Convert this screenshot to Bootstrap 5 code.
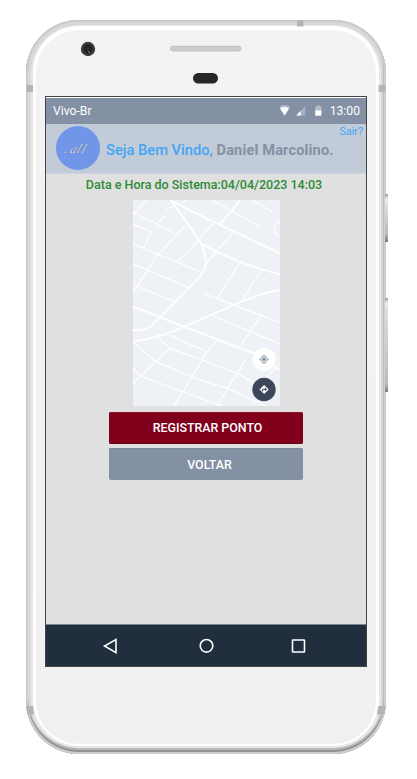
<!DOCTYPE html>
<html lang="pt-BR">
<head>
<meta charset="utf-8">
<meta name="viewport" content="width=device-width, initial-scale=1">
<title>Registro de Ponto</title>
<link rel="stylesheet" href="https://cdn.jsdelivr.net/npm/bootstrap@5.3.0/dist/css/bootstrap.min.css">
<style>
body { background: #fff; font-family: Roboto, sans-serif; width: 417px; height: 779px; overflow: hidden; }
.device { width: 360px; height: 734px; margin: 20px 0 0 26px; padding: 76px 18px 0 19px; border-radius: 53px;
  background: linear-gradient(#f3f3f3, #f0f0f0);
  box-shadow: inset 0 0 0 1px #c9c9c9, inset 0 0 0 2px #d0d0d0, inset 0 -2px 0 2px #929292, inset -2px -3px 0 1px #bcbcbc,
    inset 0 -4px 0 2px #b9b9b9, inset 0 0 0 5px #d8d8d8, inset 0 -1px 0 7px #e7e7e7, inset 0 0 1px 10px #fff; }
.bezel { left: 0; top: 0; }
.side-key { left: 359px; width: 3px; background: linear-gradient(#999 0, #eee 5px, #ddd 12px, #bbb calc(100% - 8px), #777 100%); }
.key-power { top: 174px; height: 48px; }
.key-volume { top: 278px; height: 94px; }
.screen { width: 322px; height: 571px; border: 1px solid #444; background: #e0e0e0; }
.status { height: 27px; background: #8490a4; border-top: 1px solid #fff; padding: 1px 6px 1px 7px; font-size: 12.2px; }
.welcome { height: 50px; background: #c2cbd8; border-bottom: 1px solid #ccd3dc; padding-left: 10px; }
.logo { width: 44px; height: 44px; background: #7195e9; margin-top: -2px; }
.hello { margin: 4px 0 0 6px; font-size: 14.7px; font-weight: 500; color: #42a5f5; white-space: nowrap; }
.person { color: #8490a4; font-weight: 700; font-size: 14.6px; letter-spacing: .14px; }
.leave { right: 3px; top: 1px; font-size: 10.7px; line-height: 14px; color: #42a5f5; }
.stamp { font-size: 12.5px; line-height: 16px; font-weight: 500; color: #2e8b37; margin: 3px 0 7px; padding-right: 4px; }
.area-map { width: 147px; height: 206px; margin-left: 86.5px; }
.action { width: 194px; height: 32px; margin-left: 63px; border: 0; border-radius: 2px; font-size: 12.4px; font-weight: 500; line-height: 29px; padding: 0 0 2px 3px; color: #fff !important; }
.register { background: #80001c !important; margin-top: 6px; box-shadow: inset 0 1px #8a1028, inset 0 -1px #6b0017; }
.back { background: #8490a4 !important; margin-top: 4px; padding: 0 0 0 7px; box-shadow: inset 0 1px #7b889b; }
.softkeys { height: 42px; background: #202e3d; border-top: 1px solid #78858e; }
</style>
<script src="https://cdn.jsdelivr.net/npm/bootstrap@5.3.0/dist/js/bootstrap.bundle.min.js"></script>
</head>
<body>
<div class="overflow-hidden">
<div class="device position-relative">
  <svg class="bezel position-absolute" width="360" height="734" viewBox="26 20 360 734" aria-hidden="true">
    <circle cx="88" cy="49" r="7.2" fill="#3a3b3d"/><circle cx="88" cy="49" r="4.4" fill="#17181a"/><circle cx="88" cy="49" r="3" fill="#28292c"/><circle cx="89" cy="52" r="1.1" fill="#6c6828"/>
    <rect x="170.5" y="46.3" width="70.5" height="4.600" rx="2.3" fill="#cdcdcd" stroke="#bdbdbd"/>
    <rect x="193" y="73" width="25" height="10.4" rx="5.2" fill="#262626"/>
    <g fill="#b5b5b5"><path d="M297 20h6.500v6.500h-6.500zM26.500 85h6.500v7h-6.500zM378.500 85h7v7h-7z"/><path d="M26.300 706h6.700l1 8.500h-6.500zM378.300 706h7.200l-1.300 8.500h-7.400z"/></g>
  </svg>
  <div class="side-key key-power position-absolute"></div>
  <div class="side-key key-volume position-absolute"></div>
  <main class="screen d-flex flex-column">
    <div class="status d-flex align-items-center text-white flex-shrink-0">
      <span class="me-auto">Vivo-Br</span>
      <svg width="46" height="14" viewBox="278 104 46 14" class="me-1" aria-hidden="true">
        <g transform="translate(-1.800 0)">
        <path d="M278.700 106.700q5.700-3.400 11.400 0l-5.700 8.800z" fill="#b3bbc8"/><path d="M280 108.400q4.400-2.700 8.800 0l-4.400 7z" fill="#fff"/>
        <path d="M305 106v9.500h-9z" fill="#a9b2c0"/><path d="M300.500 110.700v4.800h-4.500z" fill="#fff"/>
        <path d="M315 106.500h1.500v-1.300h3v1.300h1.700v4.500h-6.200z" fill="#b3bbc8"/><path d="M315 110.500h6.200v5.200h-6.200z" fill="#fff"/>
        </g>
      </svg>
      <span>13:00</span>
    </div>
    <header class="welcome d-flex align-items-center position-relative flex-shrink-0">
      <svg class="logo rounded-circle flex-shrink-0" viewBox="0 0 44 44">
        <g font-family="Liberation Serif, serif" font-style="italic" font-size="13" transform="translate(8 26.500) skewX(-22)"><text x=".8" y=".6" fill="#4a5d92"><tspan>.</tspan><tspan dx="2">a</tspan><tspan dx=".3">l</tspan><tspan dx="1">l</tspan></text><text fill="#d5d6d6"><tspan>.</tspan><tspan dx="2">a</tspan><tspan dx=".3">l</tspan><tspan dx="1">l</tspan></text></g>
      </svg>
      <div class="hello">Seja Bem Vindo, <span class="person">Daniel Marcolino.</span></div>
      <a class="leave position-absolute text-decoration-none" href="#">Sair?</a>
    </header>
    <p class="stamp text-center">Data e Hora do Sistema:04/04/2023 14:03</p>
    <svg class="area-map flex-shrink-0" viewBox="22 15 441 618" aria-label="Mapa">
      <path fill="#eef1f6" d="M22 15h441v618H22z"/>
      <g fill="none" stroke="#fff" stroke-width="3.500">
        <path d="M60 15 22 60M22 50l128 68M118 63 93 85M182 15l-12 10M120 45l25-12M263 83l-43 50M180 92 95 180 22 292M22 87l55 25-25 48M22 148l203 82M22 207l168 71M22 268l126 52M155 202l65-67M322 113l-47 54M258 15l145 80M378 15l65 37M343 203l-68 105M408 225l-61 93M238 297l92 33M285 315l178 67M255 360l208 87M405 362l-60 91M132 315l15 5M463 80q-24 15-15 35l15 13"/>
        <path d="M22 440l68 60 120 50 95 30 115 53M45 543l125 47 120 43M22 522l23 21-23 22M45 543l87-83-37-33M132 460l98 35 115 45 40 25M130 420l113 50M275 437l-32 33-13 25-85 138M360 495l-55 85-30 53M463 505l-38 40"/>
      </g>
      <g fill="none" stroke="#fff" stroke-width="5.500">
        <path d="M135 15l85 120q20 30 20 70 0 30-50 73l-45 47-70 70q-18 13-53 10M135 15l55 30 90 43 183 87M345 15l-62 72M225 145q105 60 238 93M275 167l-35 38M463 285q-45 7-103 30l-185 80q-60 30-153 45M22 335l153 60 210 80 78 50"/>
      </g>
      <circle cx="415" cy="493" r="35" fill="#fff"/><g fill="none" stroke="#7e8d9b" stroke-width="2.500"><circle cx="415" cy="493" r="10"/><path d="M415 479v4M415 503v4M401 493h4M425 493h4"/></g><circle cx="415" cy="493" r="5.500" fill="#7e8d9b"/>
      <circle cx="415" cy="583.500" r="35" fill="#3c485a"/><path d="M415.500 571l12.500 12.500-12.500 12.500-12.500-12.500z" fill="#fff" stroke="#fff" stroke-width="2" stroke-linejoin="round"/><path d="M410.500 589v-6h9" fill="none" stroke="#3c485a" stroke-width="3"/><path d="M418 577.500l6 5.500-6 5.500z" fill="#3c485a"/>
    </svg>
    <button class="btn action register flex-shrink-0">REGISTRAR PONTO</button>
    <button class="btn action back flex-shrink-0">VOLTAR</button>
    <svg class="softkeys mt-auto w-100 flex-shrink-0" viewBox="46 625 320 41" fill="none" stroke="#fff" stroke-width="1.600" aria-hidden="true">
      <path d="M116 639.500v13.200L104.500 646z"/><circle cx="206.500" cy="645.800" r="6.300"/><rect x="292.500" y="640" width="12" height="12" rx=".5"/>
    </svg>
  </main>
</div>
</div>
</body>
</html>
